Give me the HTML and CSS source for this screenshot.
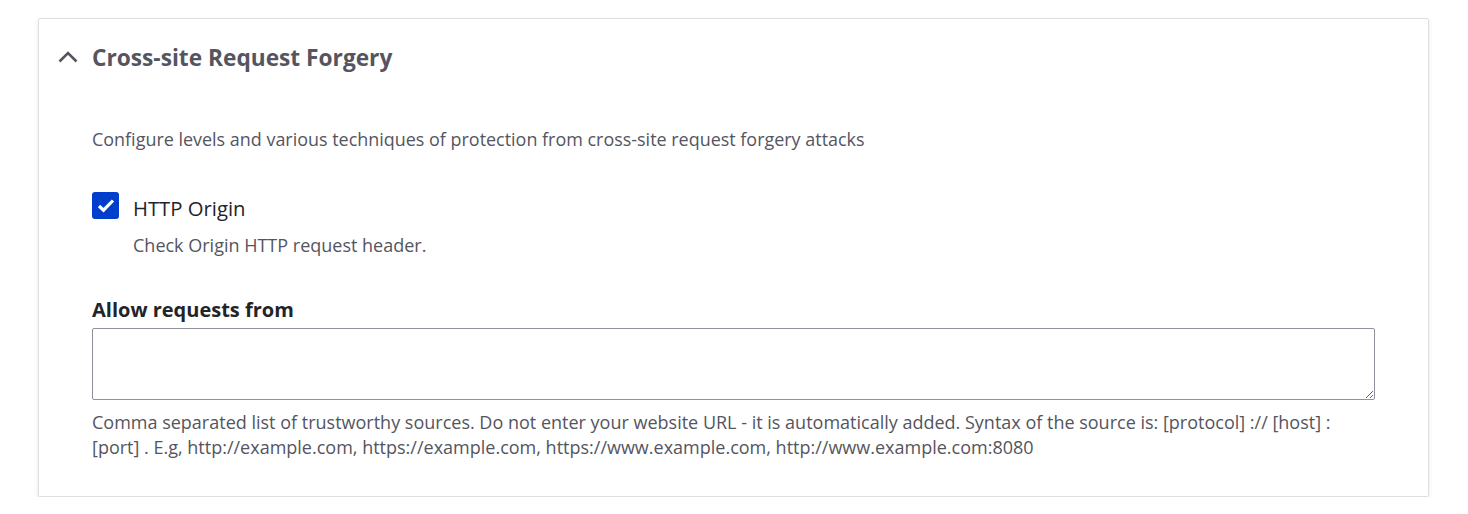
FILE: index.html
```html
<!DOCTYPE html>
<html lang="en">
<head>
<meta charset="utf-8">
<title>Cross-site Request Forgery</title>
<link rel="stylesheet" href="styles.css">
</head>
<body>
<details class="card" open>
  <summary class="card-summary">
    <svg class="chevron" width="20" height="12" viewBox="0 0 20 12" aria-hidden="true">
      <path d="M1.5 10.5 L10 2 L18.5 10.5" fill="none" stroke="#545560" stroke-width="2.6"/>
    </svg>
    <span class="card-title">Cross-site Request Forgery</span>
  </summary>
  <div class="card-body">
    <p class="card-desc">Configure levels and various techniques of protection from cross-site request forgery attacks</p>
    <div class="check-item">
      <div class="check-row">
        <span class="checkbox" role="checkbox" aria-checked="true">
          <svg width="18" height="15" viewBox="0 0 18 15" aria-hidden="true">
            <path d="M2 8 L6.5 12.2 L16 2.5" fill="none" stroke="#fff" stroke-width="3.2"/>
          </svg>
        </span>
        <label class="check-label">HTTP Origin</label>
      </div>
      <div class="check-help">Check Origin HTTP request header.</div>
    </div>
    <div class="field">
      <label class="field-label">Allow requests from</label>
      <textarea class="field-input"></textarea>
      <div class="field-help">Comma separated list of trustworthy sources. Do not enter your website URL - it is automatically added. Syntax of the source is: [protocol] :// [host] : [port] . E.g, http://example.com, https://example.com, https://www.example.com, http://www.example.com:8080</div>
    </div>
  </div>
</details>
</body>
</html>
```
FILE: styles.css
```css
html, body {
  margin: 0;
  padding: 0;
  background: #ffffff;
}
body {
  padding: 18px 38px 0 38px;
  font-family: "Open Sans", "Noto Sans", "Liberation Sans", sans-serif;
  color: #232429;
}
.card {
  width: 1391px;
  box-sizing: border-box;
  border: 1px solid #dedfe4;
  border-radius: 2px;
  box-shadow: 0 2px 4px rgba(0, 0, 0, 0.1);
  background: #fff;
  height: 479px;
}
.card-summary {
  list-style: none;
  display: flex;
  align-items: center;
  gap: 14px;
  padding: 0 0 0 19px;
  height: 77px;
  cursor: pointer;
}
.card-summary::-webkit-details-marker { display: none; }
.chevron { display: block; margin-top: -2px; }
.card-title {
  font-size: 22.7px;
  font-weight: 700;
  color: #545560;
}
.card-body {
  padding: 0 53px 0 53px;
}
.card-desc {
  margin: 30px 0 0 0;
  font-size: 17.95px;
  line-height: 27px;
  color: #545560;
}
.check-item {
  margin-top: 39px;
}
.check-row {
  display: flex;
  align-items: flex-start;
  gap: 14px;
}
.checkbox {
  width: 27px;
  height: 27px;
  flex: none;
  border-radius: 3px;
  background: #003ecc;
  display: flex;
  align-items: center;
  justify-content: center;
}
.check-label {
  padding-top: 3px;
  font-size: 20.3px;
  line-height: 27px;
  color: #232429;
}
.check-help {
  margin: 10px 0 0 41px;
  font-size: 18px;
  line-height: 27px;
  color: #545560;
}
.field {
  margin-top: 37px;
}
.field-label {
  display: block;
  font-size: 20px;
  font-weight: 700;
  line-height: 27px;
  color: #232429;
}
.field-input {
  display: block;
  box-sizing: border-box;
  width: 100%;
  height: 72px;
  margin-top: 5px;
  border: 1px solid #8e929c;
  border-radius: 2px;
  background: #fff;
  font: inherit;
}
.field-help {
  margin-top: 10px;
  font-size: 18px;
  line-height: 25px;
  color: #545560;
}
```
